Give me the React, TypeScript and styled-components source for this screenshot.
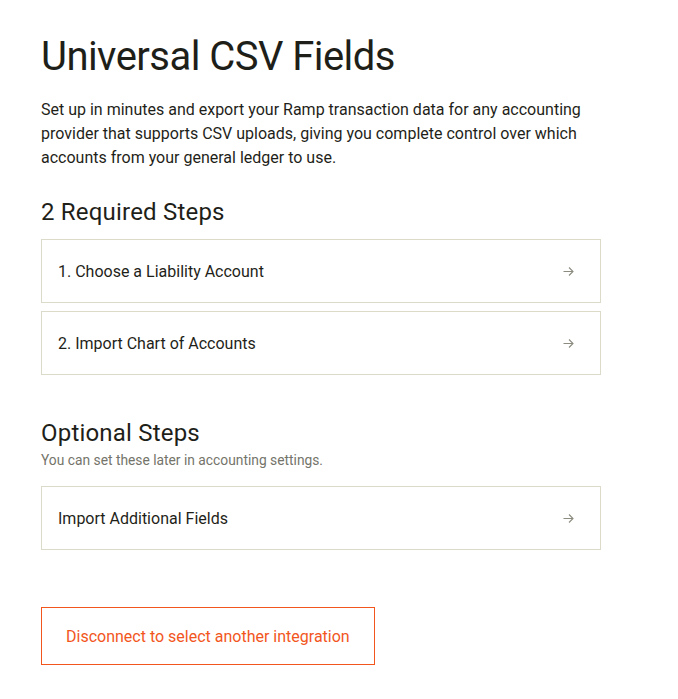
import React from "react"
import styled, { createGlobalStyle } from "styled-components"

const GlobalStyle = createGlobalStyle`
  body {
    margin: 0;
    background: #fff;
    font-family: Roboto, "Noto Sans", sans-serif;
    color: #1f1f1a;
  }
`

const Page = styled.div`
  padding: 33px 0 32px 41px;
  width: 560px;
`

const Title = styled.h1`
  margin: 0;
  font-size: 40px;
  line-height: 48px;
  font-weight: 400;
  letter-spacing: -0.55px;
  color: #1f1f1a;
`

const Intro = styled.p`
  margin: 17px 0 0;
  font-size: 16px;
  line-height: 24px;
  color: #1f1f1a;
`

const SectionTitle = styled.h2<{ $gap: number }>`
  margin: ${p => p.$gap}px 0 0;
  font-size: 24px;
  line-height: 32px;
  font-weight: 400;
  letter-spacing: 0.2px;
  color: #1f1f1a;
`

const SectionNote = styled.p`
  margin: 1px 0 0;
  font-size: 13.8px;
  line-height: 20px;
  color: #74746a;
`

const StepList = styled.div<{ $gap: number }>`
  margin-top: ${p => p.$gap}px;
  display: flex;
  flex-direction: column;
  gap: 8px;
`

const StepCard = styled.button`
  display: flex;
  align-items: center;
  justify-content: space-between;
  box-sizing: border-box;
  width: 560px;
  height: 64px;
  padding: 0 26px 0 16px;
  background: #fff;
  border: 1px solid #dcdac9;
  font-family: inherit;
  font-size: 16px;
  color: #1f1f1a;
  text-align: left;
  cursor: pointer;
`

const DangerButton = styled.button`
  margin-top: 57px;
  box-sizing: border-box;
  height: 58px;
  padding: 0 24px;
  background: #fff;
  border: 1px solid #f2561d;
  font-family: inherit;
  font-size: 16px;
  color: #f2561d;
  cursor: pointer;
`

const Arrow = () => (
  <svg width="11" height="11" viewBox="0 0 11 11" fill="none" aria-hidden="true">
    <path d="M0.5 5.5h9.5M6 1.5l4 4-4 4" stroke="#8c8c80" strokeWidth="1.1" />
  </svg>
)

const Step = ({ label }: { label: string }) => (
  <StepCard>
    <span>{label}</span>
    <Arrow />
  </StepCard>
)

export default function App() {
  return (
    <Page>
      <GlobalStyle />
      <Title>Universal CSV Fields</Title>
      <Intro>
        Set up in minutes and export your Ramp transaction data for any accounting
        provider that supports CSV uploads, giving you complete control over which
        accounts from your general ledger to use.
      </Intro>

      <SectionTitle $gap={26}>2 Required Steps</SectionTitle>
      <StepList $gap={11}>
        <Step label="1. Choose a Liability Account" />
        <Step label="2. Import Chart of Accounts" />
      </StepList>

      <SectionTitle $gap={42}>Optional Steps</SectionTitle>
      <SectionNote>You can set these later in accounting settings.</SectionNote>
      <StepList $gap={16}>
        <Step label="Import Additional Fields" />
      </StepList>

      <DangerButton>Disconnect to select another integration</DangerButton>
    </Page>
  )
}
